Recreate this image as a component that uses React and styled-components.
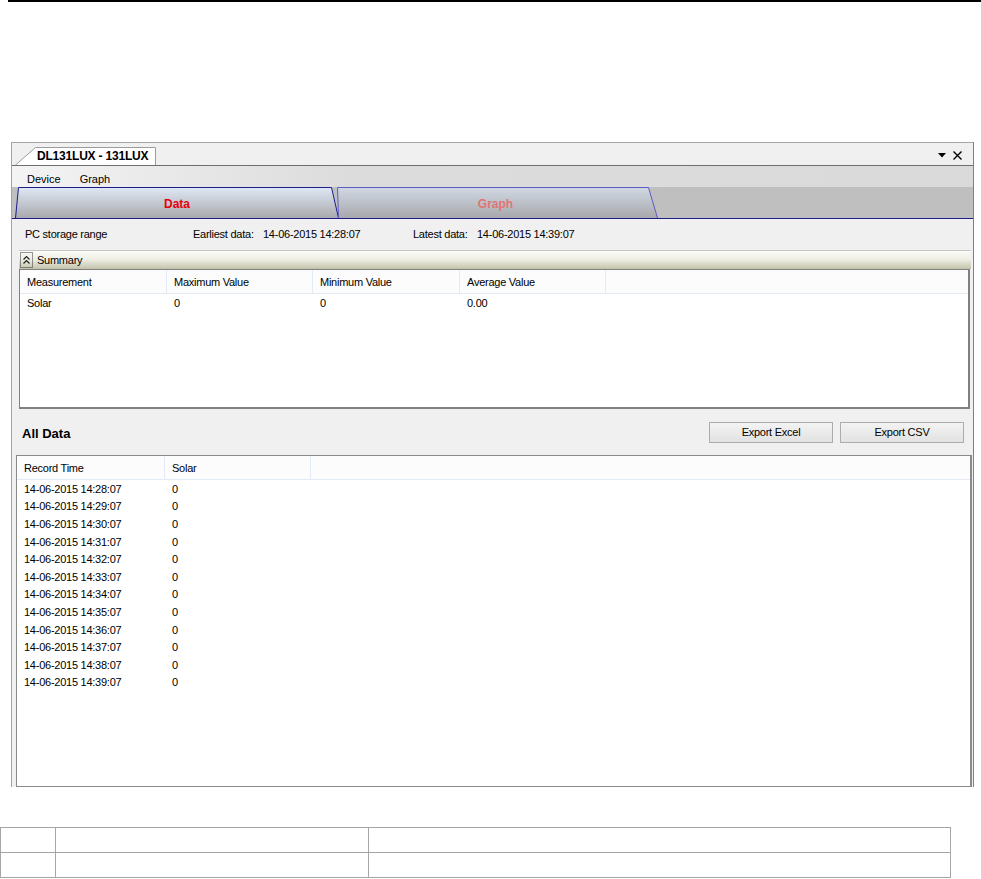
import styled, { createGlobalStyle } from 'styled-components'

const GlobalStyle = createGlobalStyle`
  html, body {
    margin: 0;
    padding: 0;
    background: #ffffff;
  }
  body {
    font-family: "Liberation Sans", Arial, sans-serif;
    color: #000;
  }
`

const records = [
    '14:28:07', '14:29:07', '14:30:07', '14:31:07', '14:32:07', '14:33:07',
    '14:34:07', '14:35:07', '14:36:07', '14:37:07', '14:38:07', '14:39:07',
]

const CollapseIcon = () => (
    <svg width="13" height="16" viewBox="0 0 13 16">
        <rect x="0.5" y="0.5" width="12" height="15" fill="none" stroke="#333" strokeDasharray="1 1" />
        <path d="M3.5 7.5 L6.5 4.5 L9.5 7.5 M3.5 11.5 L6.5 8.5 L9.5 11.5" fill="none" stroke="#222" strokeWidth="1.2" />
    </svg>
)

const App = () => {
    return (
        <>
            <GlobalStyle />
            <Page>
                <TopRule />
                <Window>
                    <TabStrip>
                        <DocTab>
                            <svg width="142" height="18" viewBox="0 0 142 18">
                                <path d="M0.5 18 L20.5 0.5 L140.5 0.5 L140.5 18" fill="#ffffff" stroke="#9c9c9c" />
                            </svg>
                            <DocTabLabel>DL131LUX - 131LUX</DocTabLabel>
                        </DocTab>
                        <StripIcons>
                            <svg width="8" height="5" viewBox="0 0 8 5">
                                <path d="M0 0 L8 0 L4 4.5 Z" fill="#000" />
                            </svg>
                            <svg width="9" height="9" viewBox="0 0 9 9">
                                <path d="M0.5 0.5 L8.5 8.5 M8.5 0.5 L0.5 8.5" stroke="#000" strokeWidth="1.4" />
                            </svg>
                        </StripIcons>
                    </TabStrip>
                    <MenuBar>
                        <MenuItem>Device</MenuItem>
                        <MenuItem>Graph</MenuItem>
                    </MenuBar>
                    <TabRow>
                        <PageTab $w={324}>
                            <svg width="324" height="31" viewBox="0 0 324 31">
                                <defs>
                                    <linearGradient id="tabA" x1="0" y1="0" x2="0" y2="1">
                                        <stop offset="0" stopColor="#dfe8f5" />
                                        <stop offset="1" stopColor="#a9a9ad" />
                                    </linearGradient>
                                </defs>
                                <path d="M0.5 31 L3.5 0.5 L316.5 0.5 L323.5 31" fill="url(#tabA)" stroke="#1c1c8a" />
                            </svg>
                            <PageTabLabel $color="#e8000b">Data</PageTabLabel>
                        </PageTab>
                        <PageTab $w={321} $shift={-2} $nudge={4}>
                            <svg width="321" height="31" viewBox="0 0 321 31">
                                <defs>
                                    <linearGradient id="tabB" x1="0" y1="0" x2="0" y2="1">
                                        <stop offset="0" stopColor="#d0d8e4" />
                                        <stop offset="1" stopColor="#a8a8ac" />
                                    </linearGradient>
                                </defs>
                                <path d="M1.5 31 L0.5 0.5 L311.5 0.5 L320.5 31" fill="url(#tabB)" stroke="#5c5cc4" />
                            </svg>
                            <PageTabLabel $color="#e27474">Graph</PageTabLabel>
                        </PageTab>
                    </TabRow>
                    <Content>
                        <InfoRow>
                            <InfoCell $w={168}>PC storage range</InfoCell>
                            <InfoCell $w={70}>Earliest data:</InfoCell>
                            <InfoCell $w={150}>14-06-2015 14:28:07</InfoCell>
                            <InfoCell $w={64}>Latest data:</InfoCell>
                            <InfoCell>14-06-2015 14:39:07</InfoCell>
                        </InfoRow>
                        <SummaryHeader>
                            <CollapseIcon />
                            <span>Summary</span>
                        </SummaryHeader>
                        <SummaryGrid>
                            <GridHeader>
                                <HeadCell $w={147}>Measurement</HeadCell>
                                <HeadCell $w={146}>Maximum Value</HeadCell>
                                <HeadCell $w={147}>Minimum Value</HeadCell>
                                <HeadCell $w={146}>Average Value</HeadCell>
                            </GridHeader>
                            <SummaryRow>
                                <Cell $w={147}>Solar</Cell>
                                <Cell $w={146}>0</Cell>
                                <Cell $w={147}>0</Cell>
                                <Cell $w={146}>0.00</Cell>
                            </SummaryRow>
                        </SummaryGrid>
                        <DataBar>
                            <DataTitle>All Data</DataTitle>
                            <Buttons>
                                <Button>Export Excel</Button>
                                <Button>Export CSV</Button>
                            </Buttons>
                        </DataBar>
                        <DataGrid>
                            <GridHeader>
                                <HeadCell $w={148}>Record Time</HeadCell>
                                <HeadCell $w={146}>Solar</HeadCell>
                            </GridHeader>
                            {records.map((t) => (
                                <DataRow key={t}>
                                    <Cell $w={148}>14-06-2015 {t}</Cell>
                                    <Cell $w={146}>0</Cell>
                                </DataRow>
                            ))}
                        </DataGrid>
                    </Content>
                </Window>
                <FooterTable>
                    <tbody>
                        <tr><FootCell $w={54} /><FootCell $w={312} /><FootCell /></tr>
                        <tr><FootCell $w={54} /><FootCell $w={312} /><FootCell /></tr>
                    </tbody>
                </FooterTable>
            </Page>
        </>
    )
}

const Page = styled.div`
    width: 981px;
    height: 879px;
    overflow: hidden;
`

const TopRule = styled.div`
    height: 2px;
    margin-left: 8px;
    background: #000;
`

const Window = styled.div`
    margin: 140px 0 0 11px;
    width: 963px;
    display: flex;
    flex-direction: column;
    border-left: 1px solid #a3a3a3;
    border-right: 1px solid #7676d2;
    box-sizing: border-box;
`

const TabStrip = styled.div`
    height: 24px;
    box-sizing: border-box;
    background: #f0f0f0;
    border-top: 1px solid #a6a6a6;
    border-bottom: 1px solid #6e6e6e;
    display: flex;
    align-items: flex-end;
    justify-content: space-between;
`

const DocTab = styled.div`
    position: relative;
    width: 142px;
    height: 18px;
    margin-left: 3px;

    svg {
        position: absolute;
        left: 0;
        top: 0;
    }
`

const DocTabLabel = styled.span`
    position: absolute;
    left: 22px;
    top: 2px;
    font-size: 12px;
    font-weight: bold;
    letter-spacing: -0.2px;
    white-space: nowrap;
`

const StripIcons = styled.div`
    display: flex;
    align-items: center;
    gap: 7px;
    height: 100%;
    padding-right: 11px;
    padding-top: 2px;
    box-sizing: border-box;
`

const MenuBar = styled.div`
    height: 21px;
    display: flex;
    align-items: center;
    padding: 5px 0 0 15px;
    box-sizing: border-box;
    background: linear-gradient(to right, #f4f4f4, #dcdcdc 35%, #dadada);
    gap: 19px;
`

const MenuItem = styled.span`
    font-size: 11px;
`

const TabRow = styled.div`
    height: 31px;
    display: flex;
    padding-left: 3px;
    background: #bfbfbf;
    border-bottom: 1px solid #1c1c8a;
`

const PageTab = styled.div`
    position: relative;
    width: ${(p) => p.$w}px;
    height: 31px;
    margin-left: ${(p) => p.$shift || 0}px;
    padding-right: ${(p) => p.$nudge || 0}px;
    box-sizing: border-box;
    display: flex;
    align-items: center;
    justify-content: center;

    svg {
        position: absolute;
        left: 0;
        top: 0;
    }
`

const PageTabLabel = styled.span`
    position: relative;
    font-size: 12px;
    font-weight: bold;
    color: ${(p) => p.$color};
    padding-top: 2px;
`

const Content = styled.div`
    background: #f0f0f0;
    display: flex;
    flex-direction: column;
    height: 568px;
`

const InfoRow = styled.div`
    height: 30px;
    margin-bottom: 1px;
    display: flex;
    align-items: center;
    padding-left: 13px;
    font-size: 11px;
    letter-spacing: -0.25px;
`

const InfoCell = styled.span`
    width: ${(p) => (p.$w ? `${p.$w}px` : 'auto')};
    white-space: nowrap;
`

const SummaryHeader = styled.div`
    height: 19px;
    margin: 0 2px 0 7px;
    box-sizing: border-box;
    border-top: 1px solid #c6c6c6;
    background: linear-gradient(#fbfbf8, #efefe6 45%, #c3c3ab);
    display: flex;
    align-items: center;
    gap: 4px;
    padding-left: 1px;
    font-size: 11px;
    letter-spacing: -0.25px;
`

const SummaryGrid = styled.div`
    height: 140px;
    margin: 0 3px 0 7px;
    box-sizing: border-box;
    background: #ffffff;
    border: 1px solid #808080;
    border-right-width: 2px;
    border-bottom-width: 2px;
`

const GridHeader = styled.div`
    height: 24px;
    box-sizing: border-box;
    display: flex;
    background: #fcfcfc;
    border-bottom: 1px solid #e2eaf5;
`

const HeadCell = styled.div`
    width: ${(p) => p.$w}px;
    padding-left: 7px;
    box-sizing: border-box;
    border-right: 1px solid #e2eaf5;
    display: flex;
    align-items: center;
    font-size: 11px;
    letter-spacing: -0.25px;
    white-space: nowrap;
`

const SummaryRow = styled.div`
    height: 18px;
    display: flex;
    align-items: center;
`

const DataRow = styled.div`
    height: 17.6px;
    display: flex;
    align-items: center;
`

const Cell = styled.div`
    width: ${(p) => p.$w}px;
    padding-left: 7px;
    box-sizing: border-box;
    font-size: 11px;
    letter-spacing: -0.25px;
    white-space: nowrap;
`

const DataBar = styled.div`
    height: 46px;
    display: flex;
    align-items: center;
    justify-content: space-between;
    padding: 0 9px 0 10px;
`

const DataTitle = styled.span`
    font-size: 13px;
    font-weight: bold;
    padding-top: 2px;
`

const Buttons = styled.div`
    display: flex;
    gap: 7px;
`

const Button = styled.button`
    width: 124px;
    height: 21px;
    padding: 0;
    font-family: "Liberation Sans", Arial, sans-serif;
    font-size: 11px;
    letter-spacing: -0.25px;
    color: #000;
    background: linear-gradient(#f3f3f3, #e2e2e2);
    border: 1px solid #acacac;
    border-radius: 0;
`

const DataGrid = styled.div`
    flex: 1;
    margin: 0 1px 0 4px;
    box-sizing: border-box;
    background: #ffffff;
    border: 1px solid #8a8a8a;
    border-right-width: 2px;
    overflow: hidden;
`

const FooterTable = styled.table`
    margin-top: 40px;
    width: 951px;
    border-collapse: collapse;
`

const FootCell = styled.td`
    width: ${(p) => (p.$w ? `${p.$w}px` : 'auto')};
    height: 24px;
    padding: 0;
    border: 1px solid #a6a6a6;
`

export default App
